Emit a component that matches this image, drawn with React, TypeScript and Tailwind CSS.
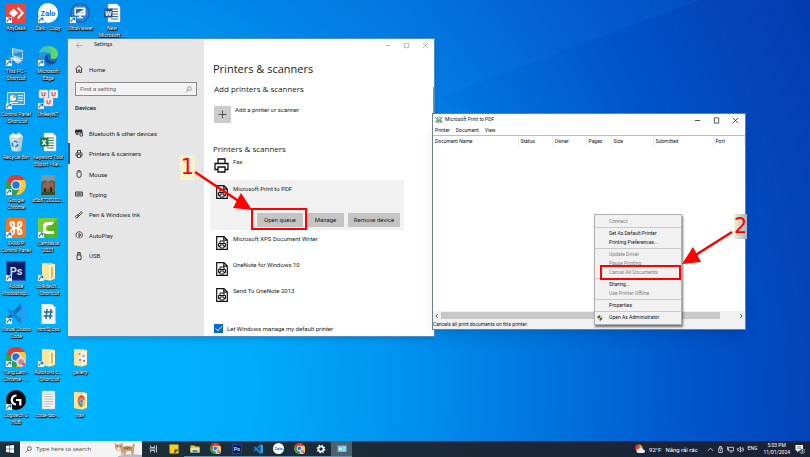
import { ReactNode } from "react";
import clsx from "clsx";

/* ---------- desktop icons ---------- */

const Svg = ({ children, className = "size-5" }: { children: ReactNode; className?: string }) => (
  <svg viewBox="0 0 20 20" className={className} aria-hidden="true">
    {children}
  </svg>
);

const AnyDesk = () => (
  <Svg>
    <rect width="20" height="20" fill="#ef443b" />
    <path d="M7.5 5.5 12 10l-4.500 4.500L3 10z" fill="#fff" />
    <path d="m11 5.500 1.500-1.500 5.500 6-5.500 6-1.500-1.500L15.200 10z" fill="#fff" />
  </Svg>
);

const Zalo = ({ className }: { className?: string }) => (
  <Svg className={className}>
    <circle cx="10" cy="10" r="10" fill="#fff" />
    <text x="10" y="12.500" fontSize="7.500" fontWeight="700" textAnchor="middle" fill="#0b6cf0">
      Zalo
    </text>
  </Svg>
);

const UltraViewer = () => (
  <Svg>
    <circle cx="10" cy="10" r="10" fill="#1c62b8" />
    <circle cx="10" cy="10" r="8.500" fill="#2f7fd4" />
    <rect x="4.500" y="4.500" width="11" height="8" rx="1" fill="#fff" />
    <path d="M6 6h8v5H6z" fill="#2566b5" />
    <path d="M6 11 14 6v5z" fill="#cfe4fb" />
    <path d="M9 12.500h2V14h2v1.200H7V14h2z" fill="#fff" />
  </Svg>
);

const Office = ({ letter, color }: { letter: string; color: string }) => (
  <Svg>
    <path d="M6 1h9l3 3v15H6z" fill="#fff" stroke="#b9c4d2" strokeWidth=".5" />
    <path d="M15 1v3h3" fill="#dde4ee" />
    <path d="M9 6h7M9 8.500h7M9 11h7M9 13.500h7M9 16h7" stroke={color} strokeWidth=".9" />
    <rect x="2" y="5.500" width="8.500" height="9" fill={color} />
    <text x="6.200" y="12.600" fontSize="7.500" fontWeight="700" textAnchor="middle" fill="#fff">
      {letter}
    </text>
  </Svg>
);

const ThisPc = () => (
  <Svg>
    <path d="m6 2 11 2.500v9L6 10z" fill="#c7e4f6" />
    <path d="m7 3.300 9.200 2.100v6.700L7 9.200z" fill="#2f8fd6" />
    <path d="m7 3.300 9.200 2.100L7 8z" fill="#69b8ec" />
    <path d="m3 12 6-1 8 3.500-6 2z" fill="#dfeaf2" />
    <path d="m9 16 5-1 1.500 1.500-4 1.200z" fill="#b6c7d4" />
  </Svg>
);

const Edge = () => (
  <Svg>
    <circle cx="10" cy="10" r="10" fill="#1b6fc4" />
    <path d="M.3 8.500C1.300 3.300 5.300 0 10.200 0 16 0 20 4.200 20 8.200c0 3-2.300 4.800-5 4.800-1.800 0-2.800-.7-2.400-1.500.6-1.100.5-3.600-2.600-4.400C6.300 6.100 2.300 6 .3 8.500z" fill="#3cc6b4" />
    <path d="M10.200 0C16 0 20 4.200 20 8.200c0 3-2.300 4.800-5 4.800-1.800 0-2.800-.7-2.400-1.500C15 7 13 2 10.200 0z" fill="#63d66a" />
    <path d="M7.500 9.500c-1.500 3.500.5 7.500 5 8.300 2.500.4 4.800-.6 6-2.300C15.500 16.500 9 16 9.800 9.800c-.8-.8-1.800-.9-2.300-.3z" fill="#0b4a99" />
    <path d="M.3 8.500C2.500 5.500 8 5.300 10 8c-3.500.5-5 6.500-.5 12C3.600 19.700-.7 14.300.3 8.500z" fill="#1f93dc" />
  </Svg>
);

const ControlPanel = () => (
  <Svg>
    <rect x="1" y="3" width="18" height="13" rx="1" fill="#bfe6fa" />
    <rect x="2" y="4" width="16" height="11" fill="#3ba6dd" />
    <circle cx="7" cy="9" r="3" fill="#fff" />
    <path d="M7 9V6a3 3 0 0 1 3 3z" fill="#f2a22c" />
    <path d="M12 6.500h5M12 9h5M12 11.500h5M4 13.500h8" stroke="#eaf7fd" strokeWidth="1" />
  </Svg>
);

const Unikey = () => (
  <Svg>
    {[[1, 1], [11, 1], [6, 9]].map(([x, y]) => (
      <g key={x}>
        <rect x={x} y={y} width="9" height="8" rx="1" fill="#f4eef0" stroke="#c9bcc4" strokeWidth=".5" />
        <path d={`M${x + 3} ${y + 2}v2.500q0 1.500 1.500 1.500t1.500-1.500V${y + 2}`} fill="none" stroke="#d63a45" strokeWidth="1.100" />
      </g>
    ))}
  </Svg>
);

const RecycleBin = () => (
  <Svg>
    <path d="m3 4 14 .5L15 18.500q-5 2-9.500 0z" fill="#dfe8ee" opacity=".9" />
    <path d="m3 4 4-3 3 1.500L13 .5l4 4-7 1z" fill="#f8fbfc" />
    <path d="m12.500 6 4-1-1.700 13-3 1z" fill="#b7c8d4" />
    <circle cx="9" cy="12" r="2.700" fill="none" stroke="#2377c9" strokeWidth="1.500" strokeDasharray="4 1.600" />
  </Svg>
);

const Chrome = ({ className, avatar }: { className?: string; avatar?: boolean }) => (
  <Svg className={className}>
    <circle cx="10" cy="10" r="10" fill="#e33b2e" />
    <path d="M1.300 5A10 10 0 0 0 10 20l4.300-7.500h-8.600z" fill="#2ba24c" />
    <path d="M18.700 5A10 10 0 0 1 10 20l4.330-7.500L14.300 7.500 10 5z" fill="#fcc934" />
    <path d="M1.300 5A10 10 0 0 1 18.700 5H10z" fill="#e33b2e" />
    <circle cx="10" cy="10" r="5" fill="#fff" />
    <circle cx="10" cy="10" r="3.800" fill="#2374e1" />
    {avatar && (
      <>
        <circle cx="15" cy="15" r="4.800" fill="#f3d3d6" />
        <path d="M12 14q3-4 6 0l-1 3.500h-4z" fill="#c88a80" />
        <circle cx="17.500" cy="17" r="1.500" fill="#e24b5b" />
      </>
    )}
  </Svg>
);

const Photo = () => (
  <Svg>
    <path d="M3 0h14v20H3z" fill="#56653f" />
    <path d="M3 0h14v6l-4-1-3 2-3-2-4 2z" fill="#7d97a6" />
    <path d="m5 9 3-2 4 1 3-1v6l-5 1-5-1z" fill="#a25a56" />
    <path d="M6 13h2v4H6zM12 12h2v5h-2z" fill="#33291f" />
    <path d="M3 17h14v3H3z" fill="#3c4a2a" />
  </Svg>
);

const Xampp = () => (
  <Svg>
    <rect width="20" height="20" rx="2.500" fill="#f37623" />
    <path d="M6.500 4C4 4 4 7.500 6 8.500L8 10l-2 1.500C4 12.500 4 16 6.500 16S8 13 8 10h4c0 3-1 6 1.500 6s2.500-3.500.5-4.500L12 10l2-1.500c2-1 2-4.500-.5-4.500S12 7 12 10H8C8 7 9 4 6.500 4z" fill="none" stroke="#fff" strokeWidth="2" />
  </Svg>
);

const Camtasia = () => (
  <Svg>
    <rect width="20" height="20" fill="#58b41b" />
    <path d="M0 0h20L0 20z" fill="#79cc32" />
    <path d="M16 4H9.500Q5 4 5 8.500v3Q5 16 9.500 16H16v-3h-5.500Q8 13 8 10.500v-1Q8 7 10.500 7H14z" fill="#fff" />
  </Svg>
);

const Photoshop = ({ className }: { className?: string }) => (
  <Svg className={className}>
    <rect width="20" height="20" fill="#0a1d5e" />
    <rect x=".7" y=".7" width="18.600" height="18.600" fill="none" stroke="#3d66d8" strokeWidth="1" />
    <text x="10" y="13.800" fontSize="11" fontWeight="600" textAnchor="middle" fill="#cfe3ff">
      Ps
    </text>
  </Svg>
);

const Folder = ({ kind }: { kind?: "photos" | "chrome" }) => (
  <Svg>
    <path d="M4 2h10l3 2v14l-4 1.500L4 18z" fill="#f0cf74" />
    <path d="m4 2 7 2v15.500L4 18z" fill="#fbe49b" />
    <path d="m11 4 6-1v14l-6 2.500z" fill="#fff4cd" />
    {!kind && <path d="m13 6 2-.5v11l-2 1z" fill="#e2b95a" />}
    {kind === "photos" && (
      <>
        <path d="m8 4 8 1v11l-8-1z" fill="#f5f3e8" />
        <circle cx="9.500" cy="7" r="1.200" fill="#e7953b" />
        <circle cx="13.500" cy="9" r="1.300" fill="#8ab3df" />
        <path d="M9 12h2v2H9zM13 13h2v2h-2z" fill="#d06f8a" />
      </>
    )}
    {kind === "chrome" && (
      <>
        <ellipse cx="11.500" cy="11" rx="3.700" ry="6" fill="#e7503f" />
        <path d="M8 12q2 5 4 5l1-6z" fill="#40a851" />
        <path d="M15 9q1 6-3 8l1-7z" fill="#fbc936" />
        <ellipse cx="11.500" cy="11" rx="1.600" ry="2.400" fill="#2b74d9" stroke="#fff" strokeWidth=".6" />
      </>
    )}
  </Svg>
);

const VsCode = ({ className }: { className?: string }) => (
  <Svg className={className}>
    <path d="M14.500 0 20 2.500v15L14.500 20z" fill="#2a9df0" />
    <path d="m14.500 0 1 5L3.500 15.200 1 13z" fill="#1271be" />
    <path d="m14.500 20 1-5L3.500 4.800 1 7z" fill="#1b85d3" />
  </Svg>
);

const HashFile = () => (
  <Svg>
    <path d="M3.500 0H14l3.500 3.500V20h-14z" fill="#f5f8fb" stroke="#a9bccb" strokeWidth=".5" />
    <path d="M9 5 8 15M13 5l-1 10M6 8h9M5.500 12h9" stroke="#276b94" strokeWidth="1.500" />
  </Svg>
);

const TextFile = () => (
  <Svg>
    <path d="M4 1h13v18H4z" fill="#f1f3f4" stroke="#b5bcc1" strokeWidth=".5" />
    <path d="M6 4h9M6 6.500h9M6 9h9M6 11.500h9M6 14h9M6 16.500h6" stroke="#aab1b6" strokeWidth=".8" />
  </Svg>
);

const Logitech = () => (
  <Svg>
    <circle cx="10" cy="10" r="10" fill="#0a0a0a" />
    <path d="M10.500 5.500A4.500 4.500 0 1 0 10 14.500M10 10h4.300v5.500" fill="none" stroke="#fff" strokeWidth="2.200" />
  </Svg>
);

type DesktopItem = { label: string[]; icon: ReactNode; place: string; shortcut?: boolean };

const desktopItems: DesktopItem[] = [
  { label: ["AnyDesk"], icon: <AnyDesk />, place: "col-start-1 row-start-1", shortcut: true },
  { label: ["This PC -", "Shortcut"], icon: <ThisPc />, place: "col-start-1 row-start-2", shortcut: true },
  { label: ["Control Panel", "- Shortcut"], icon: <ControlPanel />, place: "col-start-1 row-start-3", shortcut: true },
  { label: ["Recycle Bin"], icon: <RecycleBin />, place: "col-start-1 row-start-4" },
  { label: ["Google", "Chrome"], icon: <Chrome />, place: "col-start-1 row-start-5", shortcut: true },
  { label: ["XAMPP", "Control Panel"], icon: <Xampp />, place: "col-start-1 row-start-6", shortcut: true },
  { label: ["Adobe", "Photoshop..."], icon: <Photoshop />, place: "col-start-1 row-start-7", shortcut: true },
  { label: ["Visual Studio", "Code"], icon: <VsCode />, place: "col-start-1 row-start-8", shortcut: true },
  { label: ["Tung Lam -", "Chrome - ..."], icon: <Chrome avatar />, place: "col-start-1 row-start-9", shortcut: true },
  { label: ["Logitech G", "HUB"], icon: <Logitech />, place: "col-start-1 row-start-10", shortcut: true },
  { label: ["Zalo - Copy"], icon: <Zalo />, place: "col-start-2 row-start-1", shortcut: true },
  { label: ["Microsoft", "Edge"], icon: <Edge />, place: "col-start-2 row-start-2", shortcut: true },
  { label: ["UnikeyNT"], icon: <Unikey />, place: "col-start-2 row-start-3", shortcut: true },
  { label: ["Keyword Tool", "Export - Ke..."], icon: <Office letter="X" color="#1f7a45" />, place: "col-start-2 row-start-4" },
  { label: ["a5b8720202..."], icon: <Photo />, place: "col-start-2 row-start-5" },
  { label: ["Camtasia", "2021"], icon: <Camtasia />, place: "col-start-2 row-start-6", shortcut: true },
  { label: ["colkitech...", "- Shortcut"], icon: <Folder />, place: "col-start-2 row-start-7", shortcut: true },
  { label: ["html5j.css"], icon: <HashFile />, place: "col-start-2 row-start-8" },
  { label: ["Autoford-c...", "- Shortcut"], icon: <Folder />, place: "col-start-2 row-start-9", shortcut: true },
  { label: ["code-tab-..."], icon: <TextFile />, place: "col-start-2 row-start-10" },
  { label: ["UltraViewer"], icon: <UltraViewer />, place: "col-start-3 row-start-1", shortcut: true },
  { label: ["gallery"], icon: <Folder kind="photos" />, place: "col-start-3 row-start-9" },
  { label: ["nav"], icon: <Folder kind="chrome" />, place: "col-start-3 row-start-10" },
  { label: ["New", "Microsoft ..."], icon: <Office letter="W" color="#1d4f9e" />, place: "col-start-4 row-start-1" },
];

function DesktopIcons() {
  return (
    <div className="grid w-32 grid-cols-4 grid-rows-[repeat(10,43px)] pt-[3px]">
      {desktopItems.map((item) => (
        <button key={item.place} className={clsx("flex flex-col items-center", item.place)}>
          <span className="relative block">
            {item.icon}
            {item.shortcut && (
              <svg viewBox="0 0 6 6" className="absolute bottom-0 left-0 size-[6px]" aria-hidden="true">
                <path d="M0 0h6v6H0z" fill="#fff" />
                <path d="M1.200 5V3.800q0-1.300 2-1.300M2.600 1h2.400v2.400z" fill="#1a64b8" stroke="#1a64b8" strokeWidth=".7" />
              </svg>
            )}
          </span>
          <span className="mt-[2px] flex flex-col items-center text-[5px] leading-[7px] whitespace-nowrap text-white [text-shadow:0_0_1px_#000,0_1px_1px_#000,1px_1px_1px_#000]">
            {item.label.map((line) => (
              <span key={line}>{line}</span>
            ))}
          </span>
        </button>
      ))}
    </div>
  );
}

/* ---------- settings window ---------- */

const Line = ({ children, className = "size-2" }: { children: ReactNode; className?: string }) => (
  <svg viewBox="0 0 16 16" className={className} fill="none" stroke="currentColor" strokeWidth="1.600" aria-hidden="true">
    {children}
  </svg>
);

const navItems = [
  { label: "Bluetooth & other devices", icon: <Line><path d="M1 2h13v6M1 2v6h7M4 8v3M2 11h5M10 8h5v6h-5z" /><path d="M2 3h11v3H2z" fill="currentColor" /></Line> },
  { label: "Printers & scanners", icon: <Line><path d="M5 6V1h6v5M5 12H2V6h12v6h-3M5 9h6v6H5z" /></Line> },
  { label: "Mouse", icon: <Line><path d="M4 5q0-4 4-4t4 4v6q0 4-4 4t-4-4zM8 1v5" /></Line> },
  { label: "Typing", icon: <Line><path d="M1 4h14v8H1zM3 6.500h10M3 9.500h10" /></Line> },
  { label: "Pen & Windows Ink", icon: <Line><path d="m6 8 7-7 2 2-7 7H6zM6 8c-6 0-6 5-3 5s4-2 3-3M3 15l4-4" /></Line> },
  { label: "AutoPlay", icon: <Line><path d="M5 13.500A6.500 6.500 0 1 1 11 14M8 5v6l4-3zM8 11v4" /></Line> },
  { label: "USB", icon: <Line><path d="M4 6h8v9H4zM5.500 6V1h5v5M7 3.500h2" /></Line> },
];

const DocPrinter = () => (
  <svg viewBox="0 0 12 14" className="h-[14px] w-3" fill="none" stroke="#111" strokeWidth="1" aria-hidden="true">
    <path d="M.7.700h7.300l3.300 3.300v9.300H.7zM7.800.700v3.500h3.500" strokeWidth="1.200" />
    <path d="M4 7.500V5h4v2.500M4 10.500H2.500v-3h7v3H8M4 9h4v3H4z" />
  </svg>
);

const FaxPrinter = () => (
  <svg viewBox="0 0 15 15" className="size-[15px]" fill="none" stroke="#111" strokeWidth="1.300" aria-hidden="true">
    <path d="M4 5.500V1h7v4.500M4 11.500H1v-6h13v6h-3M4 9h7v5H4z" />
  </svg>
);

function SettingsSidebar() {
  return (
    <aside className="flex w-[136px] shrink-0 flex-col bg-[#e6e6e6]">
      <div className="flex h-3 items-center gap-[11px] pl-2 text-[5px]">
        <button aria-label="Back" className="text-[#999]">
          <Line className="size-[7px]"><path d="M15 8H1M7 2 1 8l6 6" /></Line>
        </button>
        <span>Settings</span>
      </div>
      <a href="#home" className="mt-3 flex h-3 items-center gap-[6px] pl-[7px] text-[6px]">
        <Line><path d="M1 8 8 1.500 15 8M3 7v8h3.500v-5h3v5H13V7" /></Line>
        Home
      </a>
      <div className="mx-[7px] mt-[7px] flex h-[14px] items-center border border-[#8a8a8a] bg-[#f3f3f3] px-1">
        <input
          aria-label="Find a setting"
          placeholder="Find a setting"
          className="min-w-0 flex-1 bg-transparent text-[6px] leading-2 outline-none placeholder:text-[#666]"
        />
        <Line className="size-[7px] text-[#777]"><circle cx="10" cy="6" r="4.500" /><path d="m7 9-6 6" /></Line>
      </div>
      <h3 className="mt-2 pl-[7px] text-[6px] leading-2 font-semibold">Devices</h3>
      <nav className="mt-[11px] flex h-[143px] flex-col">
        {navItems.map((item, i) => (
          <a
            key={item.label}
            href="#devices"
            className={clsx("flex flex-1 items-center gap-[6px] border-l-2 pl-[5px] text-[6px]", i === 1 ? "border-[#0a5fb8]" : "border-transparent")}
          >
            {item.icon}
            {item.label}
          </a>
        ))}
      </nav>
    </aside>
  );
}

const PrinterRow = ({ name }: { name: string }) => (
  <div className="flex h-[26px] items-start gap-[5px] pt-px pl-[6px]">
    <span className="pt-px"><DocPrinter /></span>
    <span className="text-[6px] leading-2">{name}</span>
  </div>
);

function SettingsWindow() {
  return (
    <section className="absolute top-[38px] left-[67px] flex h-[299px] w-[368px] border border-[#4c8fc4] bg-white text-[#222] shadow-md">
      <SettingsSidebar />
      <main className="relative flex-1">
        <div className="flex h-3 items-center justify-end gap-3 pr-[5px] text-[#999]">
          <button aria-label="Minimize"><Line className="size-[7px]"><path d="M3 8h10" /></Line></button>
          <button aria-label="Maximize"><Line className="size-[7px]"><path d="M3 3h10v10H3z" /></Line></button>
          <button aria-label="Close"><Line className="size-[7px]"><path d="m2 2 12 12M14 2 2 14" /></Line></button>
        </div>
        <h1 className="mt-[10px] pl-[9px] font-['Open_Sans',sans-serif] text-[11px] leading-4">Printers &amp; scanners</h1>
        <h2 className="mt-[6px] pl-[10px] font-['Open_Sans',sans-serif] text-[8px] leading-3">Add printers &amp; scanners</h2>
        <div className="mt-[11px] flex gap-1 pl-[10px]">
          <button aria-label="Add" className="flex size-[17px] items-center justify-center bg-[#ccc] text-[#444]">
            <Line className="size-[9px]"><path d="M8 1v14M1 8h14" /></Line>
          </button>
          <span className="text-[6px] leading-2">Add a printer or scanner</span>
        </div>
        <h2 className="mt-5 pl-[9px] font-['Open_Sans',sans-serif] text-[8px] leading-3">Printers &amp; scanners</h2>
        <div className="mt-[2px] flex h-[23px] gap-1 pt-px pl-[10px]">
          <FaxPrinter />
          <span className="text-[6px] leading-2">Fax</span>
        </div>
        <div className="ml-[6px] h-[50px] w-[194px] bg-[#f1f1f1]">
          <div className="flex h-[33px] items-start gap-[5px] pt-[5px] pl-[6px]">
            <DocPrinter />
            <span className="text-[6px] leading-2">Microsoft Print to PDF</span>
          </div>
          <div className="flex justify-end gap-1 pr-1 text-[6px] leading-[14px]">
            <button className="w-[46px] bg-[#c4c4c4]">Open queue</button>
            <button className="w-[37px] bg-[#c4c4c4]">Manage</button>
            <button className="w-[52px] bg-[#c4c4c4]">Remove device</button>
          </div>
        </div>
        <div className="mt-1 ml-[6px]">
          <PrinterRow name="Microsoft XPS Document Writer" />
          <PrinterRow name="OneNote for Windows 10" />
          <PrinterRow name="Send To OneNote 2013" />
        </div>
        <label className="mt-3 flex items-center gap-1 pl-[10px] text-[6px] leading-2">
          <span className="relative flex">
            <input type="checkbox" defaultChecked className="peer size-[9px] appearance-none border border-[#0a69c8] checked:bg-[#0a69c8]" />
            <Line className="pointer-events-none absolute inset-0 hidden size-[9px] text-white peer-checked:block"><path d="m3 8 4 4 7-8" /></Line>
          </span>
          Let Windows manage my default printer
        </label>
        <div className="absolute top-12 right-0 h-40 w-px bg-[#8c8c8c]" />
      </main>
    </section>
  );
}

/* ---------- print queue ---------- */

function QueueWindow() {
  return (
    <section className="absolute top-[113px] left-[432px] flex h-[217px] w-[314px] flex-col border border-[#6f7f92] bg-white text-[5px] text-[#111] shadow-lg">
      <header className="flex h-3 items-center gap-[2px] pl-[2px]">
        <svg viewBox="0 0 16 16" className="size-2" aria-hidden="true">
          <path d="M3 7h10v6H3z" fill="#8b9aa2" />
          <path d="M5 2h6v5H5z" fill="#d7dfe3" stroke="#66767f" />
          <path d="M1 3l3 3M15 3l-3 3M1 13l3-4M15 13l-3-4" stroke="#2d8a83" strokeWidth="2" fill="none" />
          <path d="M5 11h6v3H5z" fill="#fff" stroke="#66767f" />
        </svg>
        <span className="flex-1">Microsoft Print to PDF</span>
        <span className="flex gap-3 pr-[6px]">
          <button aria-label="Minimize queue"><Line className="size-[7px]"><path d="M2 8h12" /></Line></button>
          <button aria-label="Maximize queue"><Line className="size-[7px]"><path d="M3 2h10v12H3z" /></Line></button>
          <button aria-label="Close queue"><Line className="size-[7px]"><path d="m2 2 12 12M14 2 2 14" /></Line></button>
        </span>
      </header>
      <div className="flex h-[10px] items-center gap-[6px] border-b border-[#bdbdbd] pl-[2px]">
        <button>Printer</button>
        <button>Document</button>
        <button>View</button>
      </div>
      <table className="w-full table-fixed text-left leading-[10px]">
        <thead>
          <tr className="[&>th]:border-r [&>th]:border-[#ececec] [&>th]:p-0 [&>th]:pl-[2px] [&>th]:font-normal">
            <th className="w-[85px]">Document Name</th>
            <th className="w-[34px]">Status</th>
            <th className="w-[34px]">Owner</th>
            <th className="w-[25px]">Pages</th>
            <th className="w-[42px]">Size</th>
            <th className="w-[60px]">Submitted</th>
            <th>Port</th>
          </tr>
        </thead>
      </table>
      <div className="mt-auto flex h-[9px] items-center bg-[#f0f0f0] px-px text-[#444]">
        <Line className="size-[6px]"><path d="m10 3-5 5 5 5" strokeWidth="2.500" /></Line>
        <div className="ml-px h-[7px] w-[279px] bg-[#c8c8c8]" />
        <Line className="ml-auto size-[6px]"><path d="m6 3 5 5-5 5" strokeWidth="2.500" /></Line>
      </div>
      <footer className="h-[9px] bg-[#f0f0f0] leading-[9px]">Cancels all print documents on this printer.</footer>
    </section>
  );
}

const menuGroups = [
  [{ label: "Connect", off: true }],
  [{ label: "Set As Default Printer" }, { label: "Printing Preferences..." }],
  [{ label: "Update Driver", off: true }, { label: "Pause Printing", off: true }, { label: "Cancel All Documents", off: true }],
  [{ label: "Sharing..." }, { label: "Use Printer Offline", off: true }],
  [{ label: "Properties" }],
  [{ label: "Open As Administrator", shield: true }],
] as { label: string; off?: boolean; shield?: boolean }[][];

function ContextMenu() {
  return (
    <div role="menu" className="absolute top-[214px] left-[594px] w-[88px] divide-y divide-[#c9c9c9] border border-[#b0b0b0] bg-[#f1f1f1] py-px text-[5px] leading-[9px] shadow-[1px_2px_2px_#0008]">
      {menuGroups.map((group) => (
        <div key={group[0].label} className="py-px">
          {group.map((item) => (
            <button
              key={item.label}
              role="menuitem"
              className={clsx("flex w-full items-center pl-[2px] text-left", item.off ? "text-[#808080]" : "text-[#111]")}
            >
              <span className="w-3">
                {item.shield && (
                  <svg viewBox="0 0 12 12" className="size-[6px]" aria-hidden="true">
                    <path d="M6 0v6H1V2q3 0 5-2zM6 6h5q-1 4-5 6z" fill="#1f5fae" />
                    <path d="M6 0v6h5V2Q8 2 6 0zM6 6H1q1 4 5 6z" fill="#f0c630" />
                  </svg>
                )}
              </span>
              {item.label}
            </button>
          ))}
        </div>
      ))}
    </div>
  );
}

/* ---------- tutorial marks ---------- */

function Annotations() {
  return (
    <div className="pointer-events-none absolute inset-0 font-['DejaVu_Sans',sans-serif] text-[21px] leading-[25px] text-[#f00]">
      <span className="absolute top-[155px] left-[180px] w-[15px] bg-[#f6f2cf] text-center">1</span>
      <span className="absolute top-[214px] left-[734px] w-[13px] bg-linear-to-r from-[#f6f2cf] to-[#9fb6c4] text-center">2</span>
      <div className="absolute top-[208px] left-[251px] h-[22px] w-[56px] border-2 border-[#f00]" />
      <div className="absolute top-[265px] left-[600px] h-[15px] w-[81px] border-2 border-[#f00]" />
      <svg className="absolute inset-0 size-full" fill="#f00" stroke="#f00" aria-hidden="true">
        <path d="M195 172 240 202M732 232 694 256" strokeWidth="2.500" />
        <path d="m252 210-11-17-8 15zM682 264l11-17 8 15z" stroke="none" />
      </svg>
    </div>
  );
}

/* ---------- taskbar ---------- */

const Small = ({ children }: { children: ReactNode }) => <Svg className="size-[10px]">{children}</Svg>;

const pinned = [
  { name: "Task View", icon: <Small><path d="M5 3v4h8V3M5 17v-4h8v4M3 10h12M17 3v14" fill="none" stroke="#fff" strokeWidth="1.500" /></Small> },
  { name: "Sticky Notes", icon: <Small><path d="M1 1h18v18H1z" fill="#fcd116" /><path d="M11 11h8l-8 8z" fill="#3a3320" /></Small> },
  { name: "File Explorer", icon: <Small><path d="M1 3h8l2 2h8v12H1z" fill="#f2bf42" /><path d="M1 8h18v9H1z" fill="#fbe08a" /><path d="M5 12h10v5H5z" fill="#3b8fd8" /></Small> },
  { name: "Chrome", icon: <Chrome avatar className="size-[11px]" /> },
  { name: "Photoshop", icon: <Photoshop className="size-[10px]" /> },
  { name: "Visual Studio Code", icon: <VsCode className="size-[10px]" /> },
  { name: "Zalo", icon: <Zalo className="size-[11px]" /> },
  { name: "Chrome profile", icon: <Chrome avatar className="size-[11px]" /> },
  { name: "Settings", icon: <Small><circle cx="10" cy="10" r="5" fill="none" stroke="#fff" strokeWidth="3" /><circle cx="10" cy="10" r="7.500" fill="none" stroke="#fff" strokeWidth="2.500" strokeDasharray="3 2.890" /></Small> },
  { name: "Control Panel", icon: <Small><path d="M1 3h18v13H1z" fill="#69c4ee" /><circle cx="7" cy="9.500" r="3" fill="#fff" /><path d="M12 7h5M12 10h5M12 13h5" stroke="#fff" strokeWidth="1.300" /></Small>, active: true },
];

function Taskbar() {
  return (
    <footer className="flex h-4 items-center bg-linear-to-r from-[#1b323b] to-[#1a2137] text-[5px] text-white">
      <button aria-label="Start" className="flex w-5 justify-center">
        <svg viewBox="0 0 16 16" className="size-2" fill="#fff" aria-hidden="true">
          <path d="M0 2.200 7 1.200v6.300H0zM8 1l8-1v7.500H8zM0 8.500h7v6.300l-7-1zM8 8.500h8V16l-8-1z" />
        </svg>
      </button>
      <div className="flex h-full w-[122px] items-center gap-1 bg-[#f3f3f3] pl-[5px] text-[#333]">
        <Line className="size-[7px]"><circle cx="10" cy="6" r="4.500" /><path d="m7 9-6 6" /></Line>
        <input
          aria-label="Type here to search"
          placeholder="Type here to search"
          className="min-w-0 flex-1 bg-transparent font-['Open_Sans',sans-serif] text-[6px] outline-none placeholder:text-[#444]"
        />
        {/* lynx */}
        <svg viewBox="0 0 30 16" className="h-4 w-[30px] shrink-0" aria-hidden="true">
          <path d="M6 15q10-3 24-1v2H6z" fill="#b9b6cf" />
          <path d="M3 2l2 1.500h3L10.500 1.500 11 6q5-1.500 9 0l1-3 2 .3-.8 4L21.500 14h-1.800l-.7-4-5 .5-.5 4h-1.700l-.8-4-.8 4H9.500L8.800 9.500 5 9.500 3 7z" fill="#c9a27a" />
          <path d="M11 6q5-1.500 9 0l-.5 2-8 .5z" fill="#b58455" />
          <path d="M4.500 6.500h4v2.500h-3z" fill="#f2e3d0" />
          <path d="M5 5.500h1M8 5.500h1M12.500 7h1M15 7.500h1M17.500 7h1" stroke="#5a3b22" strokeWidth=".8" />
        </svg>
      </div>
      <div className="flex h-full">
        {pinned.map((app, i) => (
          <button
            key={app.name}
            aria-label={app.name}
            className={clsx("flex h-full w-[21px] items-center justify-center", app.active && "bg-[#4d626d]", i > 1 && "border-b border-[#5d8fae]")}
          >
            {app.icon}
          </button>
        ))}
      </div>
      <div className="ml-auto flex h-full items-center pr-[5px]">
        <button className="flex items-center gap-1 text-[6px]">
          <svg viewBox="0 0 20 20" className="size-[10px]" aria-hidden="true">
            <circle cx="8" cy="8" r="7" fill="#f5a021" />
            <path d="M2 2h7v9H2z" fill="#e2402e" />
            <path d="M7 18a4 4 0 0 1 0-8 5 5 0 0 1 9 1 3.500 3.500 0 0 1 1 7z" fill="#e8eef5" />
          </svg>
          <span>92°F</span>
          <span>Nắng rải rác</span>
        </button>
        <span className="ml-[9px] flex items-center gap-[3px]">
          <Line className="size-[7px]"><path d="m2 11 6-6 6 6" /></Line>
          <Line className="size-[7px]"><path d="M4 5h8v10H4zM6 5V1h4v4M8 8v4" /></Line>
          <Line className="size-[7px]"><path d="M3 3h12v8H3zM7 14h5M1 1v7h3" /></Line>
          <Line className="size-[7px]"><path d="M1 6h3l4-4v12l-4-4H1zM11 5q2 3 0 6M13 3q4 5 0 10" /></Line>
        </span>
        <span className="ml-1">ENG</span>
        <time className="ml-[6px] flex flex-col items-center leading-[7px]">
          <span>5:03 PM</span>
          <span>11/01/2024</span>
        </time>
        <button aria-label="Notifications" className="ml-[5px]">
          <svg viewBox="0 0 20 20" className="size-[10px]" aria-hidden="true">
            <path d="M1 2h15v11H8l-4 4v-4H1z" fill="#fff" />
            <path d="M4 5.500h9M4 8.500h9" stroke="#1a2137" />
            <circle cx="14.500" cy="14.500" r="5" fill="#27303f" stroke="#cfd6df" />
            <path d="M12.500 12h3.500l-1.500 2q2 .5 1 2.500h-3" fill="none" stroke="#fff" strokeWidth="1.200" />
          </svg>
        </button>
      </div>
    </footer>
  );
}

export default function App() {
  return (
    <div className="flex min-h-screen flex-col overflow-hidden bg-[radial-gradient(ellipse_105%_200%_at_8%_85%,#00b5ff_0%,#00acfc_22%,#0092ef_40%,#0074de_57%,#0055cb_74%,#0343b9_88%,#043aae_100%)] font-[Roboto,'Noto_Sans',sans-serif]">
      <div className="relative flex-1">
        <svg className="absolute inset-0 size-full" aria-hidden="true">
          <path d="M436 99 480 115 432 114zM436 99 700 0H300z" fill="#1a8cf0" opacity=".12" />
        </svg>
        <DesktopIcons />
        <SettingsWindow />
        <QueueWindow />
        <ContextMenu />
        <Annotations />
      </div>
      <Taskbar />
    </div>
  );
}
